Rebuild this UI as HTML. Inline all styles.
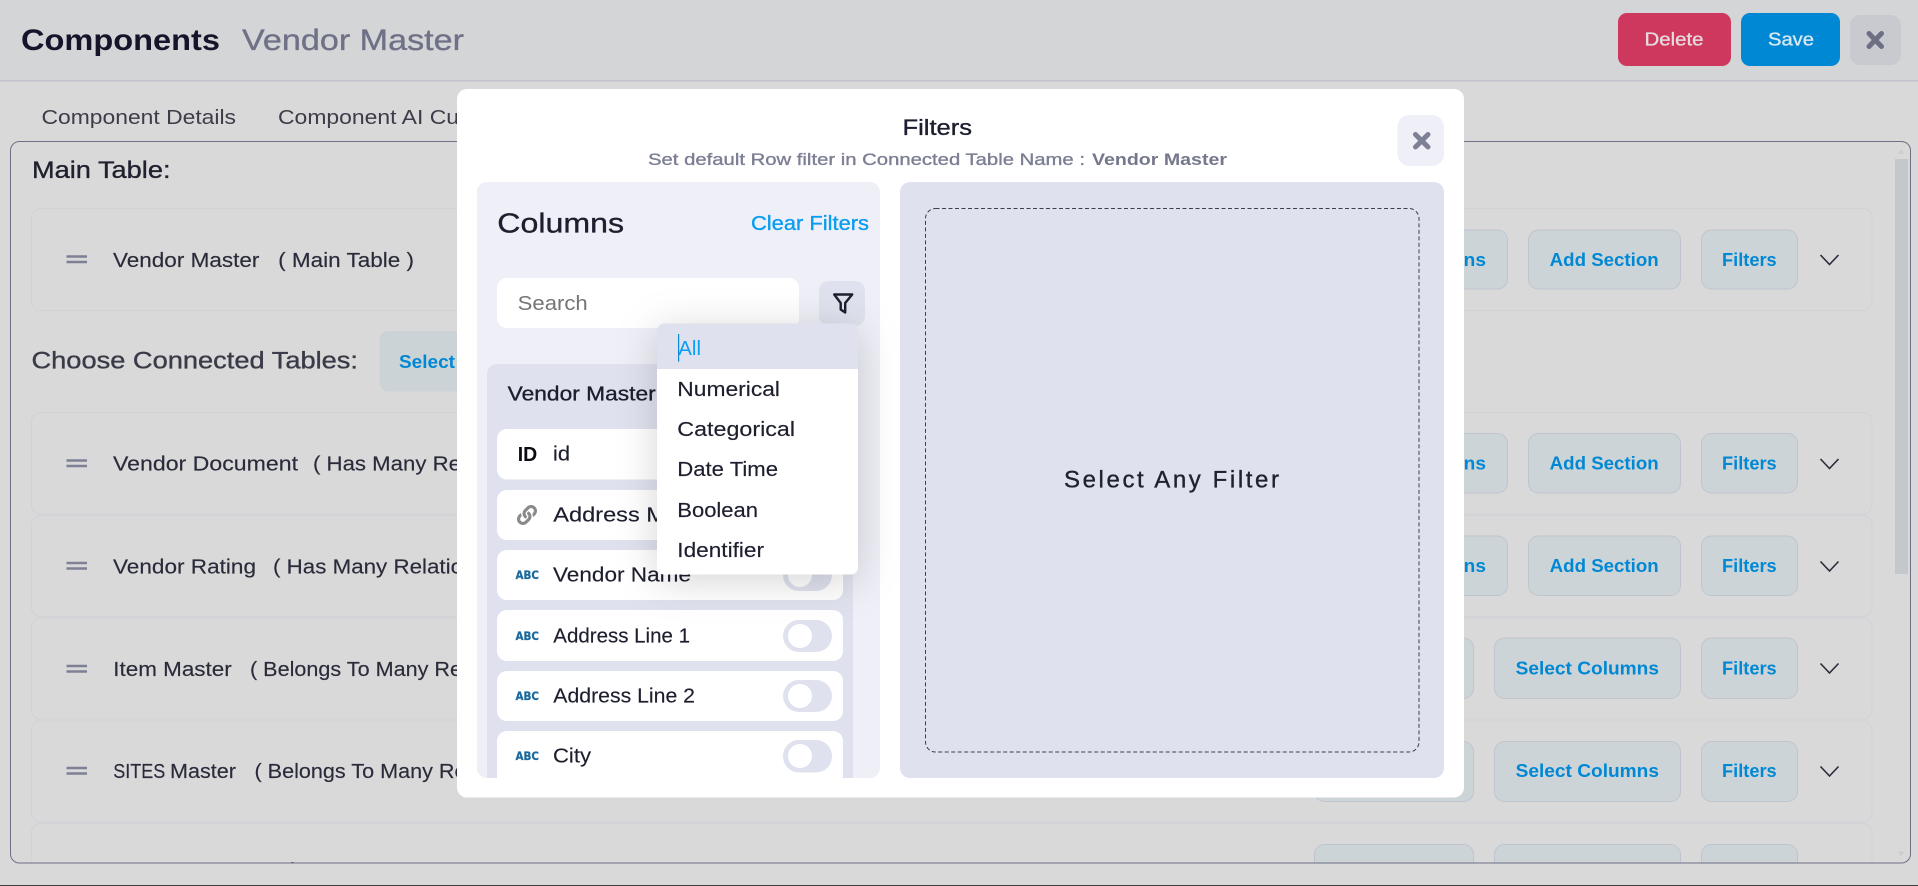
<!DOCTYPE html>
<html lang="en">
<head>
<meta charset="utf-8">
<title>Components - Vendor Master</title>
<style>
html,body{margin:0;padding:0;width:1918px;height:886px;overflow:hidden;background:#d9d9d9}
svg{display:block}
text{font-family:"Liberation Sans",Arial,sans-serif;white-space:pre}
.m{stroke:currentColor;stroke-width:.35}
.card{fill:#d9d9d9;stroke:#d0d2d7;stroke-width:1}
.btn{fill:#cdd4d8;stroke:#bfc4cf;stroke-width:1}
.bt{font-size:18px;font-weight:700;fill:#0088d4}
.rt{font-size:20.5px;fill:#2a2b3a;stroke:#2a2b3a;stroke-width:.15}
.row{fill:#fff}
.ct{font-size:20.5px;fill:#1d1e2e;stroke:#1d1e2e;stroke-width:.15}
.dd{font-size:20.5px;fill:#1d1e2e;stroke:#1d1e2e;stroke-width:.15}
.abc{font-size:11.5px;font-weight:700;fill:#1a6a9e;stroke:#1a6a9e;stroke-width:.25;font-family:"DejaVu Sans","Liberation Sans",sans-serif}
.chev{fill:none;stroke:#2a2b3a;stroke-width:1.6}
</style>
</head>
<body>
<svg xmlns="http://www.w3.org/2000/svg" width="1918" height="886" viewBox="0 0 1918 886">
<defs>
<clipPath id="panelClip"><rect x="10" y="141" width="1900.5" height="722" rx="9"/></clipPath>
<clipPath id="colClip"><rect x="477" y="182" width="403" height="596" rx="10"/></clipPath>
<filter id="ddShadow" x="-40%" y="-40%" width="180%" height="180%">
<feDropShadow dx="0" dy="6" stdDeviation="20" flood-color="#000" flood-opacity=".17"/>
</filter>
</defs>

<!-- page -->
<rect width="1918" height="886" fill="#d9d9d9"/>
<rect width="1918" height="80" fill="#d4d5d7"/>
<rect y="80" width="1918" height="1.5" fill="#c0c3cb"/>
<rect y="885" width="1918" height="1" fill="#3f3f3f"/>

<text x="21" y="50" font-size="30" font-weight="700" fill="#14152a" textLength="199" lengthAdjust="spacingAndGlyphs">Components</text>
<text x="242" y="50" font-size="30" fill="#6f7187" color="#6f7187" class="m" textLength="222" lengthAdjust="spacingAndGlyphs">Vendor Master</text>

<rect x="1618" y="13" width="113" height="53" rx="9" fill="#cf385e"/>
<text x="1644.5" y="45.5" font-size="18" fill="#e6dade" color="#e6dade" class="m" textLength="59" lengthAdjust="spacingAndGlyphs">Delete</text>
<rect x="1741" y="13" width="99" height="53" rx="9" fill="#0088d4"/>
<text x="1768" y="45.5" font-size="18" fill="#d8e8f2" color="#d8e8f2" class="m" textLength="46" lengthAdjust="spacingAndGlyphs">Save</text>
<rect x="1850" y="15" width="51" height="50" rx="10" fill="#c9cad0"/>
<path d="M1869 33.5l12.500 13M1881.500 33.5l-12.500 13" stroke="#6d6f83" stroke-width="5" stroke-linecap="round" fill="none"/>

<text x="41.5" y="124" font-size="20.5" fill="#3c3d48" textLength="194.5" lengthAdjust="spacingAndGlyphs">Component Details</text>
<text x="278" y="124" font-size="20.5" fill="#3c3d48" textLength="297" lengthAdjust="spacingAndGlyphs">Component AI Customization</text>

<!-- main scroll panel -->
<g clip-path="url(#panelClip)">
<text x="32" y="178" font-size="24" fill="#20212f" color="#20212f" class="m" textLength="138.5" lengthAdjust="spacingAndGlyphs">Main Table:</text>

<rect class="card" x="31.5" y="208.5" width="1840.5" height="102" rx="9"/>
<path d="M66.5 256.5h20.500M66.500 262h20.500" stroke="#7e8095" stroke-width="2.600" fill="none"/>
<text class="rt" x="113" y="267" textLength="301" lengthAdjust="spacingAndGlyphs">Vendor Master   ( Main Table )</text>
<rect class="btn" x="1320" y="230" width="187.500" height="59" rx="10"/>
<text class="bt" x="1342.600" y="266" textLength="143.400" lengthAdjust="spacingAndGlyphs">Select Columns</text>
<rect class="btn" x="1528.500" y="230" width="152" height="59" rx="10"/>
<text class="bt" x="1549.700" y="266" textLength="109" lengthAdjust="spacingAndGlyphs">Add Section</text>
<rect class="btn" x="1701.500" y="230" width="96" height="59" rx="10"/>
<text class="bt" x="1722" y="266" textLength="54.700" lengthAdjust="spacingAndGlyphs">Filters</text>
<path class="chev" d="M1820.500 255l9 9.500 9-9.500"/>

<text x="31.500" y="368.500" font-size="24" fill="#3a3b48" color="#3a3b48" class="m" textLength="326.500" lengthAdjust="spacingAndGlyphs">Choose Connected Tables:</text>
<rect x="379.500" y="331" width="200" height="60.500" rx="9" fill="#ccd3d7"/>
<text class="bt" x="399" y="368" textLength="56" lengthAdjust="spacingAndGlyphs">Select</text>

<!-- Vendor Document -->
<rect class="card" x="31.500" y="412.500" width="1840.500" height="101.500" rx="9"/>
<path d="M66.500 460.500h20.500M66.500 466h20.500" stroke="#7e8095" stroke-width="2.600" fill="none"/>
<text class="rt" x="113" y="470.500" textLength="185" lengthAdjust="spacingAndGlyphs">Vendor Document</text>
<text class="rt" x="313" y="470.500" textLength="148" lengthAdjust="spacingAndGlyphs">( Has Many Re</text>
<rect class="btn" x="1320" y="433.500" width="187.500" height="59.500" rx="10"/>
<text class="bt" x="1342.600" y="469.500" textLength="143.400" lengthAdjust="spacingAndGlyphs">Select Columns</text>
<rect class="btn" x="1528.500" y="433.500" width="152" height="59.500" rx="10"/>
<text class="bt" x="1549.700" y="469.500" textLength="109" lengthAdjust="spacingAndGlyphs">Add Section</text>
<rect class="btn" x="1701.500" y="433.500" width="96" height="59.500" rx="10"/>
<text class="bt" x="1722" y="469.500" textLength="54.700" lengthAdjust="spacingAndGlyphs">Filters</text>
<path class="chev" d="M1820.500 459l9 9.500 9-9.500"/>

<!-- Vendor Rating -->
<rect class="card" x="31.500" y="515.500" width="1840.500" height="101" rx="9"/>
<path d="M66.500 563h20.500M66.500 568.500h20.500" stroke="#7e8095" stroke-width="2.600" fill="none"/>
<text class="rt" x="113" y="573.500" textLength="143" lengthAdjust="spacingAndGlyphs">Vendor Rating</text>
<text class="rt" x="273" y="573.500" textLength="190" lengthAdjust="spacingAndGlyphs">( Has Many Relatio</text>
<rect class="btn" x="1320" y="536" width="187.500" height="59.500" rx="10"/>
<text class="bt" x="1342.600" y="572" textLength="143.400" lengthAdjust="spacingAndGlyphs">Select Columns</text>
<rect class="btn" x="1528.500" y="536" width="152" height="59.500" rx="10"/>
<text class="bt" x="1549.700" y="572" textLength="109" lengthAdjust="spacingAndGlyphs">Add Section</text>
<rect class="btn" x="1701.500" y="536" width="96" height="59.500" rx="10"/>
<text class="bt" x="1722" y="572" textLength="54.700" lengthAdjust="spacingAndGlyphs">Filters</text>
<path class="chev" d="M1820.500 561.500l9 9.500 9-9.500"/>

<!-- Item Master -->
<rect class="card" x="31.500" y="618" width="1840.500" height="101" rx="9"/>
<path d="M66.500 666h20.500M66.500 671.500h20.500" stroke="#7e8095" stroke-width="2.600" fill="none"/>
<text class="rt" x="113.300" y="676.200" textLength="118.400" lengthAdjust="spacingAndGlyphs">Item Master</text>
<text class="rt" x="250" y="676.200" textLength="212" lengthAdjust="spacingAndGlyphs">( Belongs To Many Re</text>
<rect class="btn" x="1314.500" y="638" width="159" height="60.500" rx="10"/>
<rect class="btn" x="1494.500" y="638" width="186" height="60.500" rx="10"/>
<text class="bt" x="1515.600" y="674.300" textLength="143.400" lengthAdjust="spacingAndGlyphs">Select Columns</text>
<rect class="btn" x="1701.500" y="638" width="96" height="60.500" rx="10"/>
<text class="bt" x="1722" y="674.300" textLength="54.700" lengthAdjust="spacingAndGlyphs">Filters</text>
<path class="chev" d="M1820.500 663.500l9 9.500 9-9.500"/>

<!-- SITES Master -->
<rect class="card" x="31.500" y="721" width="1840.500" height="101" rx="9"/>
<path d="M66.500 768h20.500M66.500 773.500h20.500" stroke="#7e8095" stroke-width="2.600" fill="none"/>
<text class="rt" x="113.300" y="778" textLength="52" lengthAdjust="spacingAndGlyphs">SITES</text>
<text class="rt" x="170" y="778" textLength="66" lengthAdjust="spacingAndGlyphs">Master</text>
<text class="rt" x="254.500" y="778" textLength="212" lengthAdjust="spacingAndGlyphs">( Belongs To Many Re</text>
<rect class="btn" x="1314.500" y="741.500" width="159" height="60" rx="10"/>
<rect class="btn" x="1494.500" y="741.500" width="186" height="60" rx="10"/>
<text class="bt" x="1515.600" y="777" textLength="143.400" lengthAdjust="spacingAndGlyphs">Select Columns</text>
<rect class="btn" x="1701.500" y="741.500" width="96" height="60" rx="10"/>
<text class="bt" x="1722" y="777" textLength="54.700" lengthAdjust="spacingAndGlyphs">Filters</text>
<path class="chev" d="M1820.500 766.500l9 9.500 9-9.500"/>

<!-- partially visible last row -->
<rect class="card" x="31.500" y="823.500" width="1840.500" height="101" rx="9"/>
<rect x="291.500" y="862" width="2" height="1.500" fill="#2a2b3a"/>
<rect class="btn" x="1314.500" y="844.500" width="159" height="60" rx="10"/>
<rect class="btn" x="1494.500" y="844.500" width="186" height="60" rx="10"/>
<rect class="btn" x="1701.500" y="844.500" width="96" height="60" rx="10"/>

<!-- scrollbar -->
<rect x="1895" y="159" width="13" height="415" fill="#c4c8cb"/>
<path d="M1897.500 154l3.500-5 3.500 5z" fill="#cbcdd0"/>
<path d="M1897.500 851.500l3.500 5 3.500-5z" fill="#cbcdd0"/>
</g>
<rect x="10.500" y="141.500" width="1900" height="721.500" rx="9" fill="none" stroke="#6f7086" stroke-width="1"/>

<!-- modal -->
<rect x="457" y="89" width="1007" height="708.500" rx="10" fill="#fff"/>
<text x="902.500" y="135" font-size="22" fill="#1d1e2e" color="#1d1e2e" class="m" textLength="69.500" lengthAdjust="spacingAndGlyphs">Filters</text>
<text x="648" y="165" font-size="17" fill="#7c7e94" color="#7c7e94" class="m" textLength="437" lengthAdjust="spacingAndGlyphs">Set default Row filter in Connected Table Name :</text>
<text x="1092" y="165" font-size="17" font-weight="700" fill="#75778c" textLength="135" lengthAdjust="spacingAndGlyphs">Vendor Master</text>
<rect x="1397.500" y="115" width="46.500" height="51" rx="12" fill="#eeeff7"/>
<path d="M1415.500 134.500l12.500 12.500M1428 134.500l-12.500 12.500" stroke="#7e8095" stroke-width="5" stroke-linecap="round" fill="none"/>

<!-- right panel -->
<rect x="900" y="182" width="544" height="596" rx="10" fill="#dfe2ee"/>
<rect x="925.500" y="208.500" width="493.500" height="543.500" rx="10" fill="none" stroke="#3c3d4e" stroke-width="1" stroke-dasharray="4 2.500"/>
<text x="1064" y="487.300" font-size="24" fill="#20212f" color="#20212f" class="m" textLength="215">Select Any Filter</text>

<!-- left panel -->
<g clip-path="url(#colClip)">
<rect x="477" y="182" width="403" height="596" fill="#eeeff7"/>
<text x="497.300" y="232.700" font-size="28" fill="#1d1e2e" color="#1d1e2e" class="m" textLength="126.700" lengthAdjust="spacingAndGlyphs">Columns</text>
<text x="751" y="230" font-size="20.500" fill="#0a9df0" color="#0a9df0" class="m" textLength="118" lengthAdjust="spacingAndGlyphs">Clear Filters</text>
<rect x="497" y="278" width="302" height="50" rx="10" fill="#fff"/>
<text x="517.700" y="310" font-size="20.500" fill="#757575" textLength="70" lengthAdjust="spacingAndGlyphs">Search</text>
<rect x="819" y="281" width="46" height="45" rx="10" fill="#dfe2ee"/>
<path d="M834.200 294.500h18l-7 8.500v9.500l-4.500-3v-6.500z" fill="none" stroke="#1d1e2e" stroke-width="2.400" stroke-linejoin="round"/>

<rect x="487" y="364" width="366" height="440" rx="10" fill="#dfe2ee"/>
<text x="507.700" y="400.700" font-size="20.500" fill="#1d1e2e" color="#1d1e2e" class="m" textLength="148" lengthAdjust="spacingAndGlyphs">Vendor Master</text>

<rect class="row" x="497" y="429" width="346" height="50.500" rx="10"/>
<text x="517.700" y="461" font-size="20" font-weight="700" fill="#0c0c14" textLength="19.500" lengthAdjust="spacingAndGlyphs">ID</text>
<text class="ct" x="553" y="460.700" textLength="17" lengthAdjust="spacingAndGlyphs">id</text>
<rect x="783" y="438" width="49" height="32" rx="16" fill="#dfe2ee"/>
<circle cx="800" cy="454" r="12" fill="#fff"/>

<rect class="row" x="497" y="490" width="346" height="50" rx="10"/>
<svg x="517" y="505" width="20" height="20" viewBox="0 0 512 512"><path fill="#8a8a8a" d="M326.612 185.391c59.747 59.809 58.927 155.698.36 214.59-.11.12-.24.25-.36.37l-67.2 67.2c-59.27 59.27-155.699 59.262-214.96 0-59.27-59.26-59.27-155.7 0-214.96l37.106-37.106c9.84-9.84 26.786-3.3 27.294 10.606.648 17.722 3.826 35.527 9.69 52.721 1.986 5.822.567 12.262-3.783 16.612l-13.087 13.087c-28.026 28.026-28.905 73.66-1.155 101.96 28.024 28.579 74.086 28.749 102.325.51l67.2-67.19c28.191-28.191 28.073-73.757 0-101.83-3.701-3.694-7.429-6.564-10.341-8.569a16.037 16.037 0 0 1-6.947-12.606c-.396-10.567 3.348-21.456 11.698-29.806l21.054-21.055c5.521-5.521 14.182-6.199 20.584-1.731a152.482 152.482 0 0 1 20.522 17.197zM467.547 44.449c-59.261-59.262-155.69-59.27-214.96 0l-67.2 67.2c-.12.12-.25.25-.36.37-58.566 58.892-59.387 154.781.36 214.59a152.454 152.454 0 0 0 20.521 17.196c6.402 4.468 15.064 3.789 20.584-1.731l21.054-21.055c8.35-8.35 12.094-19.239 11.698-29.806a16.037 16.037 0 0 0-6.947-12.606c-2.912-2.005-6.64-4.875-10.341-8.569-28.073-28.073-28.191-73.639 0-101.83l67.2-67.19c28.239-28.239 74.3-28.069 102.325.51 27.75 28.3 26.872 73.934-1.155 101.96l-13.087 13.087c-4.35 4.35-5.769 10.79-3.783 16.612 5.864 17.194 9.042 34.999 9.69 52.721.509 13.906 17.454 20.446 27.294 10.606l37.106-37.106c59.271-59.259 59.271-155.699.001-214.959z"/></svg>
<text class="ct" x="553.300" y="521.700" textLength="165" lengthAdjust="spacingAndGlyphs">Address Master</text>

<rect class="row" x="497" y="550" width="346" height="50" rx="10"/>
<text class="abc" x="515.500" y="579.200" textLength="23.500" lengthAdjust="spacingAndGlyphs">ABC</text>
<text class="ct" x="553" y="581.700" textLength="138" lengthAdjust="spacingAndGlyphs">Vendor Name</text>
<rect x="783" y="559" width="49" height="32" rx="16" fill="#dfe2ee"/>
<circle cx="800" cy="575" r="12" fill="#fff"/>

<rect class="row" x="497" y="610" width="346" height="51" rx="10"/>
<text class="abc" x="515.500" y="640.200" textLength="23.500" lengthAdjust="spacingAndGlyphs">ABC</text>
<text class="ct" x="553.300" y="642.700" textLength="136.700" lengthAdjust="spacingAndGlyphs">Address Line 1</text>
<rect x="783" y="620" width="49" height="32" rx="16" fill="#dfe2ee"/>
<circle cx="800" cy="636" r="12" fill="#fff"/>

<rect class="row" x="497" y="671" width="346" height="50" rx="10"/>
<text class="abc" x="515.500" y="700.200" textLength="23.500" lengthAdjust="spacingAndGlyphs">ABC</text>
<text class="ct" x="553.300" y="702.700" textLength="141.700" lengthAdjust="spacingAndGlyphs">Address Line 2</text>
<rect x="783" y="680" width="49" height="32" rx="16" fill="#dfe2ee"/>
<circle cx="800" cy="696" r="12" fill="#fff"/>

<rect class="row" x="497" y="731" width="346" height="60" rx="10"/>
<text class="abc" x="515.500" y="760.200" textLength="23.500" lengthAdjust="spacingAndGlyphs">ABC</text>
<text class="ct" x="553" y="762.700" textLength="38" lengthAdjust="spacingAndGlyphs">City</text>
<rect x="783" y="740" width="49" height="32.500" rx="16" fill="#dfe2ee"/>
<circle cx="800" cy="756" r="12" fill="#fff"/>
</g>

<!-- dropdown -->
<rect x="657" y="323.500" width="201" height="251" rx="7" fill="#fff" filter="url(#ddShadow)"/>
<path d="M657 369v-38.500a7 7 0 0 1 7-7h187a7 7 0 0 1 7 7v38.500z" fill="#dfe2ee"/>
<rect x="678" y="334" width="1.200" height="27.700" fill="#0a88d4"/>
<text x="678.300" y="355" font-size="20.500" fill="#0a9df0" textLength="22.700" lengthAdjust="spacingAndGlyphs">All</text>
<text class="dd" x="677.300" y="396" textLength="102.700" lengthAdjust="spacingAndGlyphs">Numerical</text>
<text class="dd" x="677.300" y="436" textLength="117.700" lengthAdjust="spacingAndGlyphs">Categorical</text>
<text class="dd" x="677.300" y="476" textLength="100.700" lengthAdjust="spacingAndGlyphs">Date Time</text>
<text class="dd" x="677.300" y="517" textLength="80.700" lengthAdjust="spacingAndGlyphs">Boolean</text>
<text class="dd" x="677.300" y="557" textLength="86.700" lengthAdjust="spacingAndGlyphs">Identifier</text>
</svg>
</body>
</html>
